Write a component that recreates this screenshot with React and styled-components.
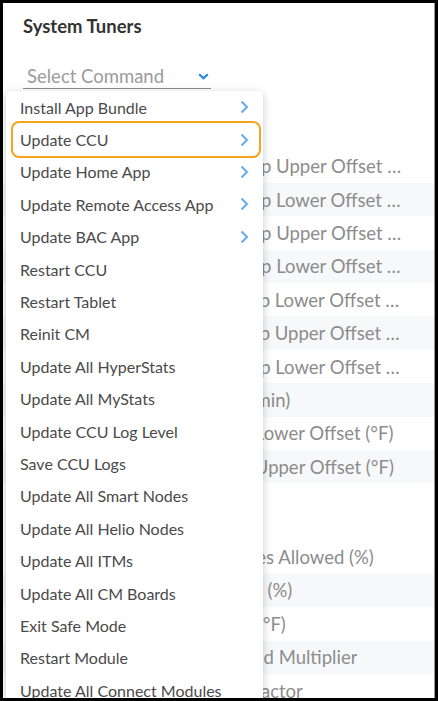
import React from "react";
import styled, { createGlobalStyle } from "styled-components";

const GlobalStyle = createGlobalStyle`
  body {
    margin: 0;
    font-family: Lato, "Open Sans", sans-serif;
    background: #fff;
  }
`;

const Frame = styled.div`
  position: relative;
  width: 438px;
  height: 701px;
  box-sizing: border-box;
  border: 3px solid #000;
  overflow: hidden;
`;

const Panel = styled.div`
  height: 100%;
  border-right: 1px solid #9a9a9a;
  background: #fff;
`;

const Header = styled.div`
  padding: 13px 20px 0 20px;
`;

const Title = styled.h4`
  margin: 0;
  font-size: 18.5px;
  line-height: 20px;
  font-weight: 700;
  color: #333;
`;

const SelectField = styled.div`
  display: flex;
  align-items: center;
  justify-content: space-between;
  width: 188px;
  height: 25px;
  margin-top: 28px;
  padding: 0 2px 0 4px;
  box-sizing: border-box;
  border-bottom: 1px solid #8c8c8c;
  font-size: 18.5px;
  color: #9b9b9b;
`;

const TunerList = styled.div`
  margin-top: 60.5px;
`;

const TunerRow = styled.div`
  height: ${(p) => (p.$tall ? "57px" : "33.4px")};
  display: flex;
  align-items: center;
  padding-left: ${(p) => p.$indent}px;
  padding-right: 30px;
  background: ${(p) => (p.$shade ? "#f7f8fa" : "#fff")};
  font-size: 18.5px;
  color: #8c8c8c;
  white-space: nowrap;
  overflow: hidden;
`;

const TunerName = styled.span`
  overflow: hidden;
  text-overflow: ellipsis;
`;

const Menu = styled.ul`
  position: absolute;
  top: 88px;
  left: 3px;
  width: 257px;
  margin: 0;
  padding: 0;
  list-style: none;
  background: #fff;
  border-radius: 4px;
  box-shadow: 0 2px 8px rgba(0, 0, 0, 0.22);
`;

const MenuItem = styled.li`
  display: flex;
  align-items: center;
  justify-content: space-between;
  height: 32.4px;
  margin: 0 4px 0 7px;
  padding: 0 10px 0 7px;
  font-size: 16px;
  color: #4a4a4a;
  border-radius: 6px;
  outline: ${(p) => (p.$active ? "2px solid #f5a31a" : "none")};
`;

const ChevronRight = () => (
  <svg width="9" height="14" viewBox="0 0 9 14">
    <path d="M1.5 1.5 L7 7 L1.5 12.5" fill="none" stroke="#62acf2" strokeWidth="2" />
  </svg>
);

const ChevronDown = () => (
  <svg width="11" height="7" viewBox="0 0 11 7">
    <path d="M1.2 1.2 L5.5 5.2 L9.8 1.2" fill="none" stroke="#1f86e8" strokeWidth="2.2" />
  </svg>
);

const commands = [
  { name: "Install App Bundle", sub: true },
  { name: "Update CCU", sub: true, active: true },
  { name: "Update Home App", sub: true },
  { name: "Update Remote Access App", sub: true },
  { name: "Update BAC App", sub: true },
  { name: "Restart CCU" },
  { name: "Restart Tablet" },
  { name: "Reinit CM" },
  { name: "Update All HyperStats" },
  { name: "Update All MyStats" },
  { name: "Update CCU Log Level" },
  { name: "Save CCU Logs" },
  { name: "Update All Smart Nodes" },
  { name: "Update All Helio Nodes" },
  { name: "Update All ITMs" },
  { name: "Update All CM Boards" },
  { name: "Exit Safe Mode" },
  { name: "Restart Module" },
  { name: "Update All Connect Modules" },
];

const tuners = [
  { text: "Zone Cooling Deadband Temp Upper Offset (°F)", indent: 24 },
  { text: "Zone Cooling Deadband Temp Lower Offset (°F)", indent: 24 },
  { text: "Zone Heating Deadband Temp Upper Offset (°F)", indent: 22 },
  { text: "Zone Heating Deadband Temp Lower Offset (°F)", indent: 22 },
  { text: "Zone Reheat Deadband Temp Lower Offset (°F)", indent: 28 },
  { text: "Zone Reheat Deadband Temp Upper Offset (°F)", indent: 28 },
  { text: "Zone Auto Deadband Temp Lower Offset (°F)", indent: 46 },
  { text: "Zone Temp Dead Time (min)", indent: 61 },
  { text: "User Limit Spread Temp Lower Offset (°F)", indent: 56 },
  { text: "User Limit Spread Temp Upper Offset (°F)", indent: 56 },
  { text: "", tall: true },
  { text: "Maximum Damper Changes Allowed (%)", indent: 47 },
  { text: "Reheat Damper Minimum (%)", indent: 52 },
  { text: "Discharge Air Temp (°F)", indent: 94 },
  { text: "Proportional Gain Spread Multiplier", indent: 67 },
  { text: "Integral Gain Spread Factor", indent: 80 },
];

export default function App() {
  let shade = false;
  return (
    <>
      <GlobalStyle />
      <Frame>
        <Panel>
          <Header>
            <Title>System Tuners</Title>
            <SelectField>
              <span>Select Command</span>
              <ChevronDown />
            </SelectField>
          </Header>
          <TunerList>
            {tuners.map((t, i) => {
              const row = (
                <TunerRow key={i} $tall={t.tall} $shade={!t.tall && shade} $indent={t.indent || 20}>
                  <TunerName>{t.text}</TunerName>
                </TunerRow>
              );
              shade = t.tall ? false : !shade;
              return row;
            })}
          </TunerList>
        </Panel>
        <Menu>
          {commands.map((c) => (
            <MenuItem key={c.name} $active={c.active}>
              <span>{c.name}</span>
              {c.sub && <ChevronRight />}
            </MenuItem>
          ))}
        </Menu>
      </Frame>
    </>
  );
}
